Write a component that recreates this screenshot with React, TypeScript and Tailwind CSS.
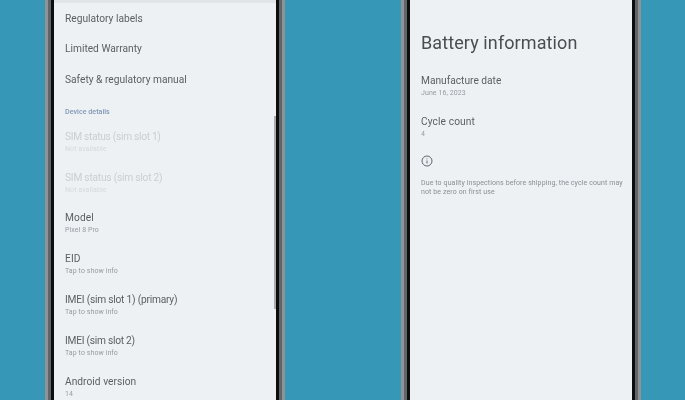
const Two = ({ t, s, dim, tr = "tracking-[0.1px]" }: { t: string; s: string; dim?: boolean; tr?: string }) => (
  <div className="h-[40.8px] flex flex-col justify-center">
    <div className={`text-[10.2px] leading-[14px] ${tr} ${dim ? "text-[#cbced1]" : "text-[#5c5f62]"}`}>{t}</div>
    <div className={`text-[7px] leading-[9px] mt-[1px] tracking-[0.08px] ${dim ? "text-[#d6d9dc]" : "text-[#989b9f]"}`}>{s}</div>
  </div>
);

const One = ({ t }: { t: string }) => (
  <div className="h-[30.5px] flex items-center text-[10.2px] tracking-[0px] text-[#5c5f62]">{t}</div>
);

const Phone = ({ pad, bar, children }: { pad: string; bar?: boolean; children: React.ReactNode }) => (
  <div className="w-[240px] h-[400px] shrink-0 flex px-[3px] bg-[#8d9396]">
    <div className="flex-1 flex px-[3px] bg-[#5f6568] min-w-0">
      <div className="flex-1 flex px-[3px] bg-[#0c0d0e] min-w-0">
        <div className={`relative flex-1 min-w-0 bg-[#eef1f4] overflow-hidden ${pad}`}>
          {bar && <div className="absolute right-0 top-[116px] w-[2px] h-[193px] bg-[#a9acaf]" />}
          {children}
        </div>
      </div>
    </div>
  </div>
);

export default function App() {
  return (
    <div className="w-[685px] h-[400px] overflow-hidden flex gap-[116px] pl-[45px] bg-[#3797b6] font-['Roboto',sans-serif] blur-[0.45px]">
      <Phone pad="pl-[11px]" bar>
        <div className="h-[3px] -ml-[11px] bg-[#e2e5e8]" />
        <One t="Regulatory labels" />
        <One t="Limited Warranty" />
        <One t="Safety & regulatory manual" />
        <div className="h-[27px] pt-[9px] flex items-center text-[7.2px] font-medium text-[#7f98b8]">Device details</div>
        <Two t="SIM status (sim slot 1)" s="Not available" dim tr="tracking-[-0.3px]" />
        <Two t="SIM status (sim slot 2)" s="Not available" dim tr="tracking-[-0.22px]" />
        <Two t="Model" s="Pixel 8 Pro" />
        <Two t="EID" s="Tap to show info" />
        <Two t="IMEI (sim slot 1) (primary)" s="Tap to show info" tr="tracking-[-0.22px]" />
        <Two t="IMEI (sim slot 2)" s="Tap to show info" tr="tracking-[-0.25px]" />
        <Two t="Android version" s="14" tr="tracking-[0.03px]" />
      </Phone>
      <Phone pad="pl-[11px] pr-[7px] pt-[31px]">
        <div className="text-[18px] leading-[24px] tracking-[0.1px] text-[#4a4d50]">Battery information</div>
        <div className="mt-[11px]">
          <Two t="Manufacture date" s="June 16, 2023" tr="tracking-[0px]" />
          <Two t="Cycle count" s="4" />
        </div>
        <svg className="mt-[7px] w-[12px] h-[12px] text-[#62666a]" viewBox="0 0 24 24" fill="none" stroke="currentColor" strokeWidth="2">
          <circle cx="12" cy="12" r="10" />
          <path d="M12 11v6M12 7v1.6" />
        </svg>
        <div className="mt-[12px] text-[7px] leading-[9px] tracking-[0.1px] text-[#8b8e92]">
          Due to quality inspections before shipping, the cycle count may not be zero on first use
        </div>
      </Phone>
    </div>
  );
}
